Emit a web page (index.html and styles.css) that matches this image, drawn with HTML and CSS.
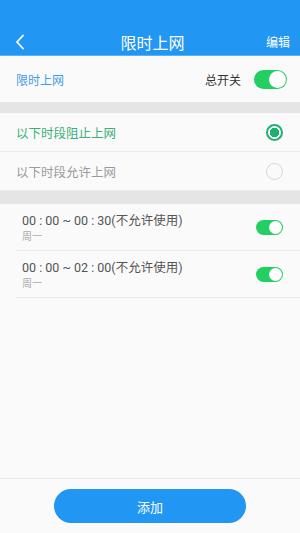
FILE: index.html
```html
<!DOCTYPE html>
<html>
<head>
    <title>限时上网</title>
    <link rel="stylesheet" href="styles.css">
</head>
<body>
    <div class="page">
        <div class="header">
            <span class="back">
                <svg width="10" height="16" viewBox="0 0 10 16"><path d="M8 1.5 L2 8 L8 14.5" fill="none" stroke="#fff" stroke-width="1.8" stroke-linecap="round" stroke-linejoin="round"/></svg>
            </span>
            <span class="title">限时上网</span>
            <span class="edit">编辑</span>
        </div>

        <div class="main">
            <div class="row master">
                <span class="label">限时上网</span>
                <span class="right">总开关 <span class="switch big"></span></span>
            </div>

            <div class="band"></div>

            <div class="row mode active">
                <span>以下时段阻止上网</span>
                <span class="radio on"></span>
            </div>
            <div class="row mode">
                <span>以下时段允许上网</span>
                <span class="radio"></span>
            </div>

            <div class="band band2"></div>

            <div class="item">
                <div class="info">
                    <div class="time">00 : 00 ~ 00 : 30(不允许使用)</div>
                    <div class="day">周一</div>
                </div>
                <span class="switch"></span>
            </div>
            <div class="item">
                <div class="info">
                    <div class="time">00 : 00 ~ 02 : 00(不允许使用)</div>
                    <div class="day">周一</div>
                </div>
                <span class="switch"></span>
            </div>
        </div>

        <div class="footer">
            <div class="add">添加</div>
        </div>
    </div>
</body>
</html>
```

FILE: styles.css
```css
* {
    margin: 0;
    padding: 0;
    box-sizing: border-box;
}

body {
    background: #fafafa;
    font-family: "Noto Sans CJK SC", "Noto Sans", sans-serif;
}

.page {
    width: 300px;
    height: 533px;
    display: flex;
    flex-direction: column;
}

.header {
    height: 56px;
    padding: 28px 10px 0 15px;
    background: #2196f3;
    color: #fff;
    display: flex;
    align-items: center;
    border-bottom: 1px solid #5ab3f5;
}

.back {
    width: 20px;
    display: flex;
    align-items: center;
}

.title {
    flex: 1;
    text-align: center;
    font-size: 16px;
    padding-left: 4px;
}

.edit {
    font-size: 12px;
}

.main {
    flex: 1;
    background: #fafafa;
}

.row {
    display: flex;
    align-items: center;
    justify-content: space-between;
    padding: 0 16px;
}

.master {
    height: 46px;
    padding-right: 13px;
}

.master .label {
    color: #3d9de8;
    font-size: 12px;
}

.master .right {
    display: flex;
    align-items: center;
    gap: 13px;
    font-size: 12px;
    color: #333;
}

.band {
    height: 11px;
    background: #e5e5e5;
}

.band2 {
    height: 13px;
}

.mode {
    height: 39px;
    font-size: 12.5px;
    color: #9a9a9a;
    border-bottom: 1px solid #ececec;
}

.mode:last-of-type {
    border-bottom: 0;
}

.mode.active {
    color: #3aaf78;
}

.radio {
    width: 17px;
    height: 17px;
    border-radius: 50%;
    border: 1.5px solid #d6d6d6;
    margin-right: 1px;
}

.radio.on {
    border: 2px solid #1fb071;
    background: radial-gradient(circle, #1fb071 0 4.5px, #fff 5px);
}

.switch {
    display: inline-block;
    width: 27px;
    height: 15px;
    border-radius: 8px;
    background: #22cf62;
    position: relative;
}

.switch::after {
    content: "";
    position: absolute;
    right: 1px;
    top: 1px;
    width: 13px;
    height: 13px;
    border-radius: 50%;
    background: #fff;
}

.switch.big {
    width: 33px;
    height: 19px;
    border-radius: 10px;
}

.switch.big::after {
    width: 17px;
    height: 17px;
}

.item {
    margin-left: 16px;
    height: 47px;
    padding: 0 17px 0 6px;
    display: flex;
    align-items: center;
    justify-content: space-between;
    border-bottom: 1px solid #ececec;
}

.info {
    margin-top: 2px;
}

.time {
    font-family: Roboto, "Noto Sans CJK SC", sans-serif;
    font-size: 12.5px;
    color: #555;
    line-height: 16px;
}

.day {
    font-size: 10px;
    color: #aaa;
    line-height: 14px;
}

.footer {
    height: 55px;
    border-top: 1px solid #ececec;
    display: flex;
    justify-content: center;
    padding-top: 10px;
    background: #fafafa;
}

.add {
    width: 192px;
    height: 34px;
    border-radius: 17px;
    background: #2196f3;
    color: #fff;
    font-size: 13px;
    display: flex;
    align-items: center;
    justify-content: center;
}
```
